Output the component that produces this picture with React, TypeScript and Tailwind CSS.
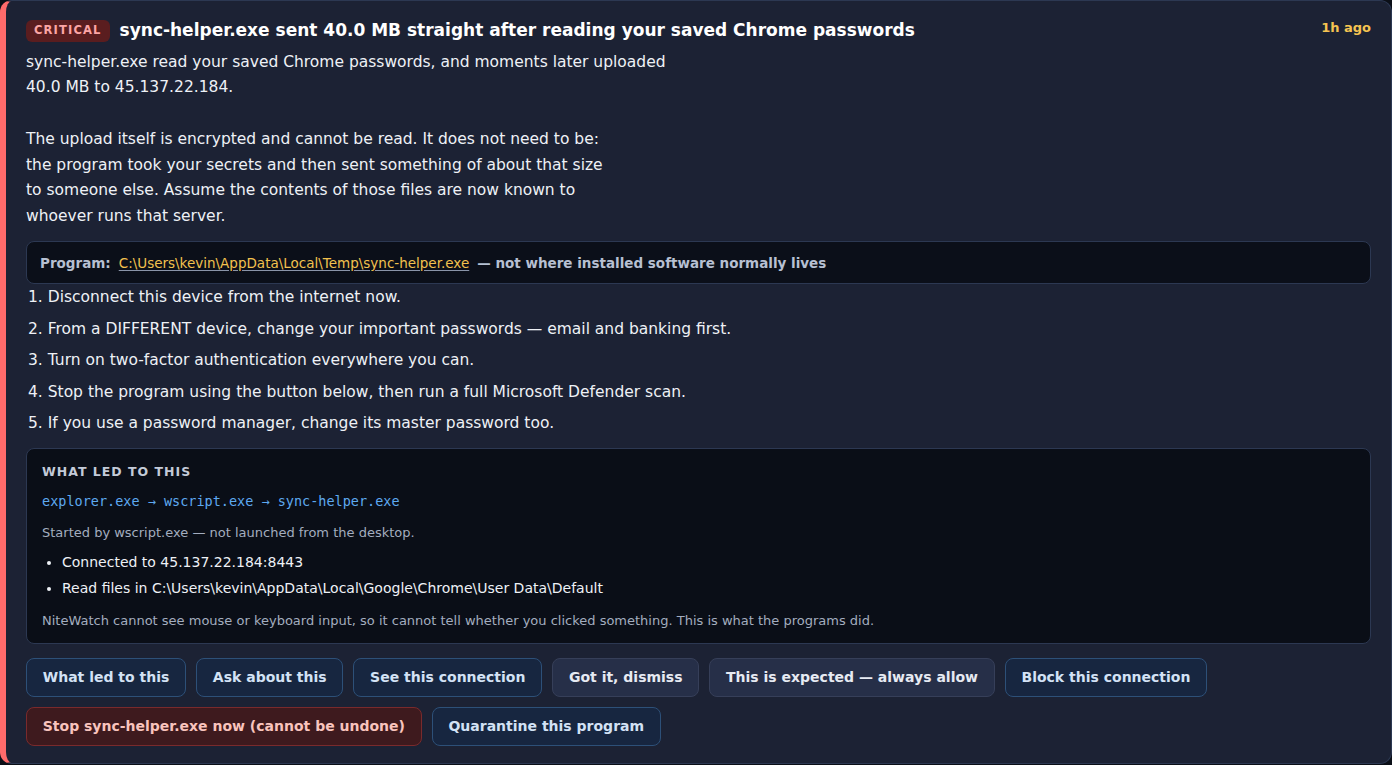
const BODY = `sync-helper.exe read your saved Chrome passwords, and moments later uploaded
40.0 MB to 45.137.22.184.

The upload itself is encrypted and cannot be read. It does not need to be:
the program took your secrets and then sent something of about that size
to someone else. Assume the contents of those files are now known to
whoever runs that server.`

const STEPS = [
  "Disconnect this device from the internet now.",
  "From a DIFFERENT device, change your important passwords — email and banking first.",
  "Turn on two-factor authentication everywhere you can.",
  "Stop the program using the button below, then run a full Microsoft Defender scan.",
  "If you use a password manager, change its master password too.",
]

const blueBtn = "h-[39px] px-[15.75px] rounded-lg border border-[#2d5078] bg-[#172640] text-[#d3e2f5] text-[14px] font-bold"
const grayBtn = "h-[39px] px-[15.75px] rounded-lg border border-[#363f59] bg-[#262f48] text-[#e6eaf2] text-[14px] font-bold"
const redBtn = "h-[39px] px-[15.75px] rounded-lg border border-[#7a2a2c] bg-[#3e1a1e] text-[#f9c4bd] text-[14px] font-bold"

export default function App() {
  return (
    <div className="min-h-screen bg-[#0b0f17]" style={{ fontFamily: '"DejaVu Sans", sans-serif' }}>
      <div className="rounded-[12px] border border-[#2c3852] border-l-[6px] border-l-[#ff6b6b] bg-[#1c2234] pl-5 pr-5 pt-[17px] pb-[17px] text-[#e8ecf3]">
        {/* header */}
        <div className="flex items-start justify-between">
          <div className="flex items-center gap-[10px]">
            <span className="h-[22px] px-2 flex items-center rounded-md bg-[#5a1d1f] text-[#fca5a5] text-[11.5px] font-bold tracking-[0.1em]">
              CRITICAL
            </span>
            <h1 className="text-[17px] font-bold text-white">
              sync-helper.exe sent 40.0 MB straight after reading your saved Chrome passwords
            </h1>
          </div>
          <span className="text-[13px] font-bold text-[#f5c451]">1h ago</span>
        </div>

        <p className="mt-[6px] whitespace-pre-line text-[15.5px] leading-[25.8px] text-[#eef1f6]">{BODY}</p>

        <div className="mt-[11px] rounded-lg border border-[#2c3852] bg-[#0b0f19] px-[13px] py-[12.5px] text-[13.5px] leading-[16px]">
          <span className="font-bold text-[#b7c0d2]">Program:</span>
          <span className="ml-2 text-[#f2c14e] underline decoration-[#8a94a8] underline-offset-2">
            C:\Users\kevin\AppData\Local\Temp\sync-helper.exe
          </span>
          <span className="ml-2 font-bold text-[#b7c0d2]">— not where installed software normally lives</span>
        </div>

        <ol className="mt-[2px] list-decimal list-inside pl-[2px] text-[15.5px] leading-[23.5px] text-[#eef1f6]">
          {STEPS.map((s) => (
            <li key={s} className="mb-2">{s}</li>
          ))}
        </ol>

        <div className="mt-[12px] rounded-lg border border-[#2c3852] bg-[#0a0e17] px-[15px] pt-4 pb-[14px]">
          <div className="text-[12.5px] font-bold tracking-[0.08em] text-[#c3cad8] leading-[14px]">WHAT LED TO THIS</div>
          <div
            className="mt-[12px] text-[13.5px] leading-[20px] text-[#5ea9f0]"
            style={{ fontFamily: '"DejaVu Sans Mono", monospace' }}
          >
            explorer.exe → wscript.exe → sync-helper.exe
          </div>
          <div className="mt-[13px] text-[13px] leading-[18px] text-[#a3adbf]">
            Started by wscript.exe — not launched from the desktop.
          </div>
          <ul className="mt-[7px] list-disc pl-5 text-[14px] leading-[26px] text-[#eef1f6]">
            <li>Connected to 45.137.22.184:8443</li>
            <li>Read files in C:\Users\kevin\AppData\Local\Google\Chrome\User Data\Default</li>
          </ul>
          <div className="mt-[12px] text-[13px] leading-[16px] text-[#a3adbf]">
            NiteWatch cannot see mouse or keyboard input, so it cannot tell whether you clicked something. This is what the programs did.
          </div>
        </div>

        <div className="mt-[14px] flex flex-wrap gap-[10px]">
          <button className={blueBtn}>What led to this</button>
          <button className={blueBtn}>Ask about this</button>
          <button className={blueBtn}>See this connection</button>
          <button className={grayBtn}>Got it, dismiss</button>
          <button className={grayBtn}>This is expected — always allow</button>
          <button className={blueBtn}>Block this connection</button>
        </div>
        <div className="mt-[10px] flex flex-wrap gap-[10px]">
          <button className={redBtn}>Stop sync-helper.exe now (cannot be undone)</button>
          <button className={blueBtn}>Quarantine this program</button>
        </div>
      </div>
    </div>
  )
}
